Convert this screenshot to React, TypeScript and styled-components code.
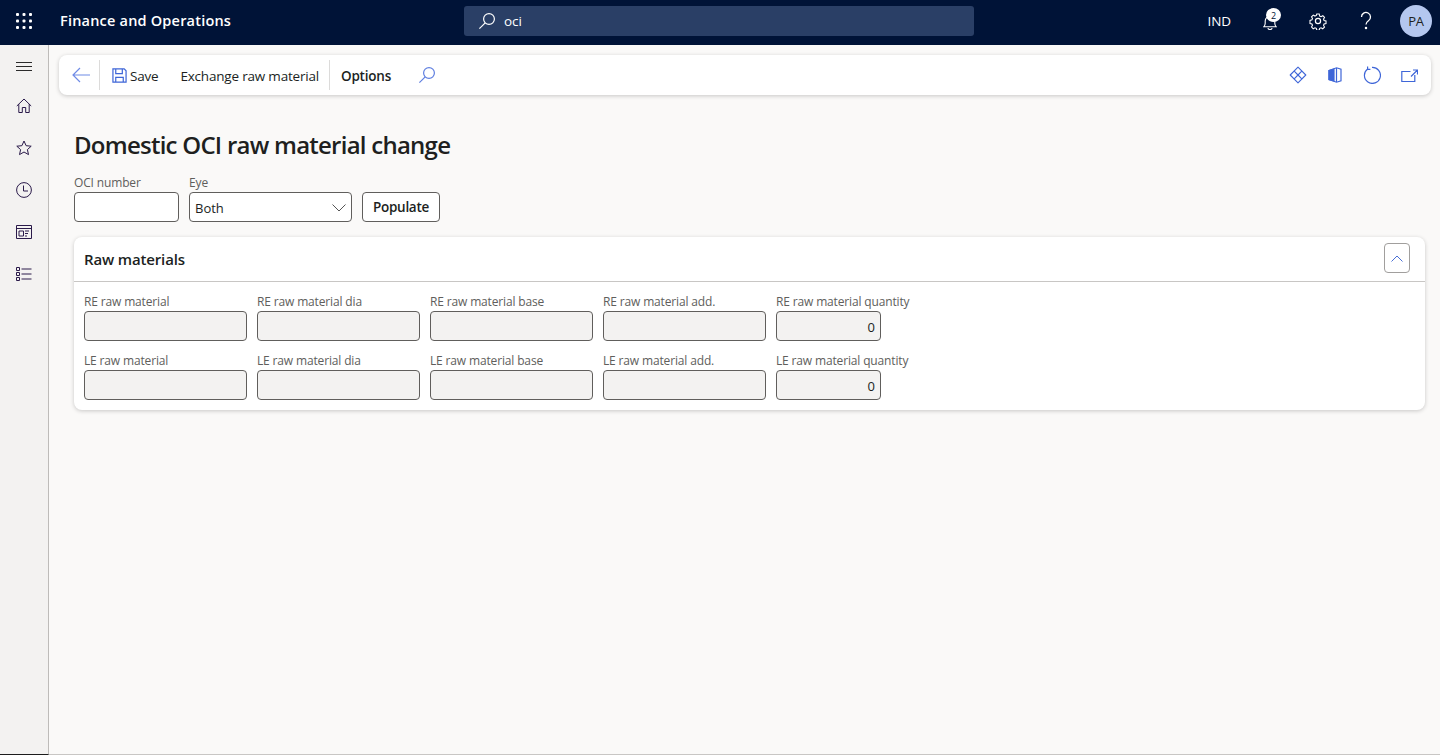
import React from "react";
import styled, { createGlobalStyle } from "styled-components";

const FONT = `"Open Sans", "Noto Sans", "Liberation Sans", sans-serif`;

const Global = createGlobalStyle`
  html, body { margin: 0; padding: 0; height: 100%; overflow: hidden; background: #faf9f8; }
  #root { height: 100%; }
  * { box-sizing: border-box; }
`;

const Shell = styled.div`
  width: 1440px; height: 755px; display: flex; flex-direction: column;
  font-family: ${FONT}; color: #201f1e; background: #faf9f8; overflow: hidden;
`;
const TopBar = styled.header`
  height: 45px; flex: none; background: #001337; display: flex; align-items: center; padding-bottom: 3px; color: #fff;
`;
const Waffle = styled.div`
  width: 48px; display: flex; justify-content: center; align-items: center; flex: none;
`;
const Brand = styled.div`
  margin: 0 0 1px 12px; font-size: 14.5px; font-weight: 600; letter-spacing: 0.2px; width: 404px; white-space: nowrap;
`;
const SearchBox = styled.div`
  width: 510px; height: 30px; background: #2a3f66; border-radius: 3px; display: flex; align-items: center;
  padding-left: 14px; gap: 8px; font-size: 13.5px; flex: none;
`;
const TopRight = styled.div`
  margin-left: auto; display: flex; align-items: center; padding-right: 8px;
`;
const TopLang = styled.span`
  font-size: 13.5px; letter-spacing: -0.1px; margin-right: 15px;
`;
const TopIcon = styled.div`
  width: 48px; height: 42px; display: flex; align-items: center; justify-content: center; position: relative; flex: none;
`;
const Bell = styled.svg`
  margin-top: 3px;
`;
const Badge = styled.span`
  position: absolute; top: 8px; left: 20px; width: 15px; height: 14px; border-radius: 50%; background: #fff; color: #001337;
  font-size: 9px; display: flex; align-items: center; justify-content: center; line-height: 1;
`;
const Avatar = styled.div`
  width: 32px; height: 32px; border-radius: 50%; background: #b4c7ef; color: #201f1e; font-size: 13px; margin-left: 10px;
  display: flex; align-items: center; justify-content: center; letter-spacing: -0.2px;
`;
const Body = styled.div`
  flex: 1; display: flex; min-height: 0;
`;
const Rail = styled.nav`
  width: 49px; flex: none; background: #f3f2f1; border-right: 1px solid #bdbbb9; border-bottom: 1px solid #1c1c1c;
  display: flex; flex-direction: column; align-items: center;
`;
const RailItem = styled.div`
  width: 48px; height: 42px; display: flex; align-items: center; justify-content: center;
`;
const Main = styled.main`
  flex: 1; min-width: 0; padding: 10px 9px 0 10px; border-bottom: 1px solid #c8c6c4;
`;
const Toolbar = styled.div`
  height: 40px; background: #fff; border-radius: 8px; box-shadow: 0 1px 4px rgba(0,0,0,.2); display: flex; align-items: center;
  padding: 0 0 0 10px; font-size: 13.5px;
`;
const ToolIcon = styled.div`
  width: 24px; height: 24px; display: flex; align-items: center; justify-content: center; flex: none;
`;
const SaveIcon = styled(ToolIcon)`
  width: 16px; margin-right: 3px; margin-left: 1px;
`;
const FindIcon = styled(ToolIcon)`
  margin-left: 24px;
`;
const Sep = styled.div<{ $wide?: boolean }>`
  width: 1px; height: 30px; background: #dcdbda; flex: none;
  margin: ${p => (p.$wide ? "0 11px 0 10px" : "0 10px 0 6px")};
`;
const ToolLabel = styled.span<{ $strong?: boolean; $gap?: number }>`
  letter-spacing: -0.2px; white-space: nowrap; font-weight: ${p => (p.$strong ? 600 : 400)};
  margin-top: 2px; margin-left: ${p => p.$gap ?? 0}px;
`;
const ToolRight = styled.div`
  margin-left: auto; display: flex; align-items: center; gap: 13px; padding-right: 10px;
`;
const Page = styled.div`
  padding: 0 6px 0 15px;
`;
const Title = styled.h1`
  margin: 33px 0 0; font-size: 24px; line-height: 34px; font-weight: 600; letter-spacing: -0.75px; color: #201f1e; white-space: nowrap;
`;
const FilterRow = styled.div`
  display: flex; align-items: flex-end; gap: 10px; margin-top: 13px;
`;
const Field = styled.div<{ $w: number }>`
  width: ${p => p.$w}px; flex: none;
`;
const FieldLabel = styled.div`
  font-size: 12px; line-height: 15px; height: 15px; margin-bottom: 2px; color: #605e5c; letter-spacing: -0.15px; white-space: nowrap;
`;
const Input = styled.div<{ $disabled?: boolean; $right?: boolean }>`
  height: 30px; border: 1px solid #605e5c; border-radius: 4px; background: ${p => (p.$disabled ? "#f3f2f1" : "#fff")};
  display: flex; align-items: center; padding: 1px 5px 0 5px; font-size: 13px;
  justify-content: ${p => (p.$right ? "flex-end" : "space-between")};
`;
const Button = styled.div`
  height: 30px; width: 78px; border: 1px solid #605e5c; border-radius: 4px; background: #fff; display: flex; align-items: center; justify-content: center;
  font-size: 13.5px; font-weight: 600; letter-spacing: -0.3px; flex: none;
`;
const Card = styled.section`
  margin-top: 15px; background: #fff; border-radius: 8px; box-shadow: 0 1px 4px rgba(0,0,0,.2); height: 173px;
`;
const CardHead = styled.div`
  height: 45px; border-bottom: 1px solid #c8c6c4; display: flex; align-items: center; justify-content: space-between; padding: 0 15px 0 10px;
`;
const CardTitle = styled.div`
  font-size: 15px; font-weight: 600; letter-spacing: -0.15px;
`;
const Collapse = styled.div`
  width: 26px; height: 30px; margin-bottom: 2px; border: 1px solid #a19f9d; border-radius: 4px; background: #fff;
  display: flex; align-items: center; justify-content: center;
`;
const Grid = styled.div`
  display: grid; grid-template-columns: 163px 163px 163px 163px 105px; gap: 12px 10px; padding: 12px 10px 0;
`;

const I = { fill: "none", stroke: "currentColor", strokeWidth: 1 } as const;

const Ink = styled.span`
  color: #2a1a4a; display: inline-flex;
`;

const SearchIcon = ({ c = "#fff" }: { c?: string }) => (
  <svg width="18" height="18" viewBox="0 0 18 18" fill="none" stroke={c} strokeWidth="1.2">
    <circle cx="11" cy="7" r="5.4" />
    <path d="M7.2 10.8 1.4 16.6" />
  </svg>
);

const fields = [
  ["RE raw material", "RE raw material dia", "RE raw material base", "RE raw material add.", "RE raw material quantity"],
  ["LE raw material", "LE raw material dia", "LE raw material base", "LE raw material add.", "LE raw material quantity"],
];

export default function App() {
  return (
    <>
      <Global />
      <Shell>
        <TopBar>
          <Waffle>
            <svg width="16" height="16" viewBox="0 0 16 16" fill="#fff">
              {[1.5, 8, 14.5].flatMap(y => [1.5, 8, 14.5].map(x => <rect key={`${x}-${y}`} x={x - 1.5} y={y - 1.5} width="3" height="3" rx="1" />))}
            </svg>
          </Waffle>
          <Brand>Finance and Operations</Brand>
          <SearchBox><SearchIcon /><span>oci</span></SearchBox>
          <TopRight>
            <TopLang>IND</TopLang>
            <TopIcon>
              <Bell width="14" height="15" viewBox="0 0 14 15" fill="none" stroke="#fff" strokeWidth="1.1">
                <path d="M.8 11.8c1-.9 1.4-1.8 1.4-3.5V6a4.8 4.8 0 0 1 9.6 0v2.3c0 1.7.4 2.6 1.4 3.5z" />
                <path d="M5 13a2 1.6 0 0 0 4 0" />
              </Bell>
              <Badge>2</Badge>
            </TopIcon>
            <TopIcon>
              <svg width="18" height="18" viewBox="0 0 18 18" fill="none" stroke="#fff" strokeWidth="1.2">
                <circle cx="9" cy="9" r="2.6" />
                <path d="M7.6 1.2h2.8l.5 2.2 1.5.7 2-1.1 1.9 2-1.1 1.9.6 1.5 2.2.6v2.8l-2.2.5-.6 1.5 1.1 2-2 1.9-1.9-1.1-1.5.6-.6 2.2H7.6l-.5-2.2-1.5-.6-2 1.1-1.9-2 1.1-1.9-.6-1.5-2.2-.5V8.3l2.2-.6.6-1.5-1.1-2 2-1.9 1.9 1.1 1.5-.7z" transform="translate(1 1) scale(.89)" />
              </svg>
            </TopIcon>
            <TopIcon>
              <svg width="14" height="20" viewBox="0 0 14 20" fill="none" stroke="#fff" strokeWidth="1.3">
                <path d="M2.5 6a4.5 4.5 0 1 1 7 3.7C8 10.8 7 11.5 7 13.5" />
                <circle cx="7" cy="17" r=".6" fill="#fff" />
              </svg>
            </TopIcon>
            <Avatar>PA</Avatar>
          </TopRight>
        </TopBar>
        <Body>
          <Rail>
            <svg width="16" height="40" viewBox="0 0 16 40" fill="none" stroke="#2b2b2b" strokeWidth="1">
              <path d="M0 17.5h16M0 21.5h16M0 25.5h16" />
            </svg>
            <RailItem>
              <Ink><svg width="16" height="16" viewBox="0 0 16 16" {...I}><path d="M.8 8 8 1l7.2 7M2.8 6.2v8.3h3.5V9.5h3.4v5h3.5V6.2" /></svg></Ink>
            </RailItem>
            <RailItem>
              <Ink><svg width="16" height="16" viewBox="0 0 16 16" {...I}><path d="m8 1 2.1 4.7 5.1.5-3.8 3.4 1.1 5L8 12l-4.5 2.6 1.1-5L.8 6.2l5.1-.5z" /></svg></Ink>
            </RailItem>
            <RailItem>
              <Ink><svg width="16" height="16" viewBox="0 0 16 16" {...I}><circle cx="8" cy="8" r="7.4" /><path d="M7.5 3.5v5.5H12" /></svg></Ink>
            </RailItem>
            <RailItem>
              <Ink><svg width="16" height="14" viewBox="0 0 16 14" {...I}><path d="M.5.5h15v13H.5zM.5 3.5h15M3 6h4.5v5H3zM9 6h4M9 8.5h3M9 11h2" /></svg></Ink>
            </RailItem>
            <RailItem>
              <Ink><svg width="16" height="14" viewBox="0 0 16 14" {...I}><path d="M.5.5h3v3h-3zM.5 5.5h3v3h-3zM.5 10.5h3v3h-3zM5.5 2h10M5.5 7h10M5.5 12h10" /></svg></Ink>
            </RailItem>
          </Rail>
          <Main>
            <Toolbar>
              <ToolIcon>
                <svg width="18" height="16" viewBox="0 0 18 16" fill="none" stroke="#6f8be6" strokeWidth="1.2"><path d="M8 1 1 8l7 7M1 8h17" /></svg>
              </ToolIcon>
              <Sep />
              <SaveIcon>
                <svg width="15" height="15" viewBox="0 0 16 16" fill="none" stroke="#3f66d8" strokeWidth="1.3"><path d="M1 1h12l2 2v12H1z" /><path d="M4 1v5h7V1M4 15v-5h8v5" /></svg>
              </SaveIcon>
              <ToolLabel>Save</ToolLabel>
              <ToolLabel $gap={22}>Exchange raw material</ToolLabel>
              <Sep $wide />
              <ToolLabel $strong>Options</ToolLabel>
              <FindIcon><SearchIcon c="#5f7fe0" /></FindIcon>
              <ToolRight>
                <ToolIcon>
                  <svg width="18" height="18" viewBox="0 0 18 18" fill="none" stroke="#3f66d8" strokeWidth="1.1" strokeLinejoin="round"><path d="M9 1.2 16.8 9 9 16.8 1.2 9z" /><path d="M5.2 5.2 9 9l3.8-3.8M5.2 12.8 9 9l3.8 3.8" /></svg>
                </ToolIcon>
                <ToolIcon>
                  <svg width="14" height="16" viewBox="0 0 14 16" fill="none" stroke="#3f66d8" strokeWidth="1.2"><path d="M1 3.5 8.5.8l4.5 1.5v11.4L8.5 15.2 1 12.5z" /><path d="M8.5 1v14" /><path d="M1 3.5l5-1.5v12l-5-1.5z" fill="#3f66d8" /></svg>
                </ToolIcon>
                <ToolIcon>
                  <svg width="18" height="18" viewBox="0 0 18 18" fill="none" stroke="#3f66d8" strokeWidth="1.2"><path d="M4.6 3A8 8 0 1 0 9 1.4M4.6 .6v2.8h2.8" /></svg>
                </ToolIcon>
                <ToolIcon>
                  <svg width="17" height="13" viewBox="0 0 17 13" fill="none" stroke="#3f66d8" strokeWidth="1.2"><path d="M9.5 2.5H.8v10h13V6M10 7.5l6-6M12 1h4.5v4.5" /></svg>
                </ToolIcon>
              </ToolRight>
            </Toolbar>
            <Page>
              <Title>Domestic OCI raw material change</Title>
              <FilterRow>
                <Field $w={105}>
                  <FieldLabel>OCI number</FieldLabel>
                  <Input />
                </Field>
                <Field $w={163}>
                  <FieldLabel>Eye</FieldLabel>
                  <Input>
                    <span>Both</span>
                    <svg width="14" height="8" viewBox="0 0 14 8" fill="none" stroke="#555" strokeWidth="1"><path d="m.5.5 6.5 6.5 6.5-6.5" /></svg>
                  </Input>
                </Field>
                <Button>Populate</Button>
              </FilterRow>
              <Card>
                <CardHead>
                  <CardTitle>Raw materials</CardTitle>
                  <Collapse>
                    <svg width="12" height="7" viewBox="0 0 12 7" fill="none" stroke="#4a6fd6" strokeWidth="1"><path d="m.5 6.5 5.5-5.5 5.5 5.5" /></svg>
                  </Collapse>
                </CardHead>
                <Grid>
                  {fields.flat().map((label, i) => (
                    <div key={label}>
                      <FieldLabel>{label}</FieldLabel>
                      <Input $disabled $right>{i % 5 === 4 ? "0" : ""}</Input>
                    </div>
                  ))}
                </Grid>
              </Card>
            </Page>
          </Main>
        </Body>
      </Shell>
    </>
  );
}
